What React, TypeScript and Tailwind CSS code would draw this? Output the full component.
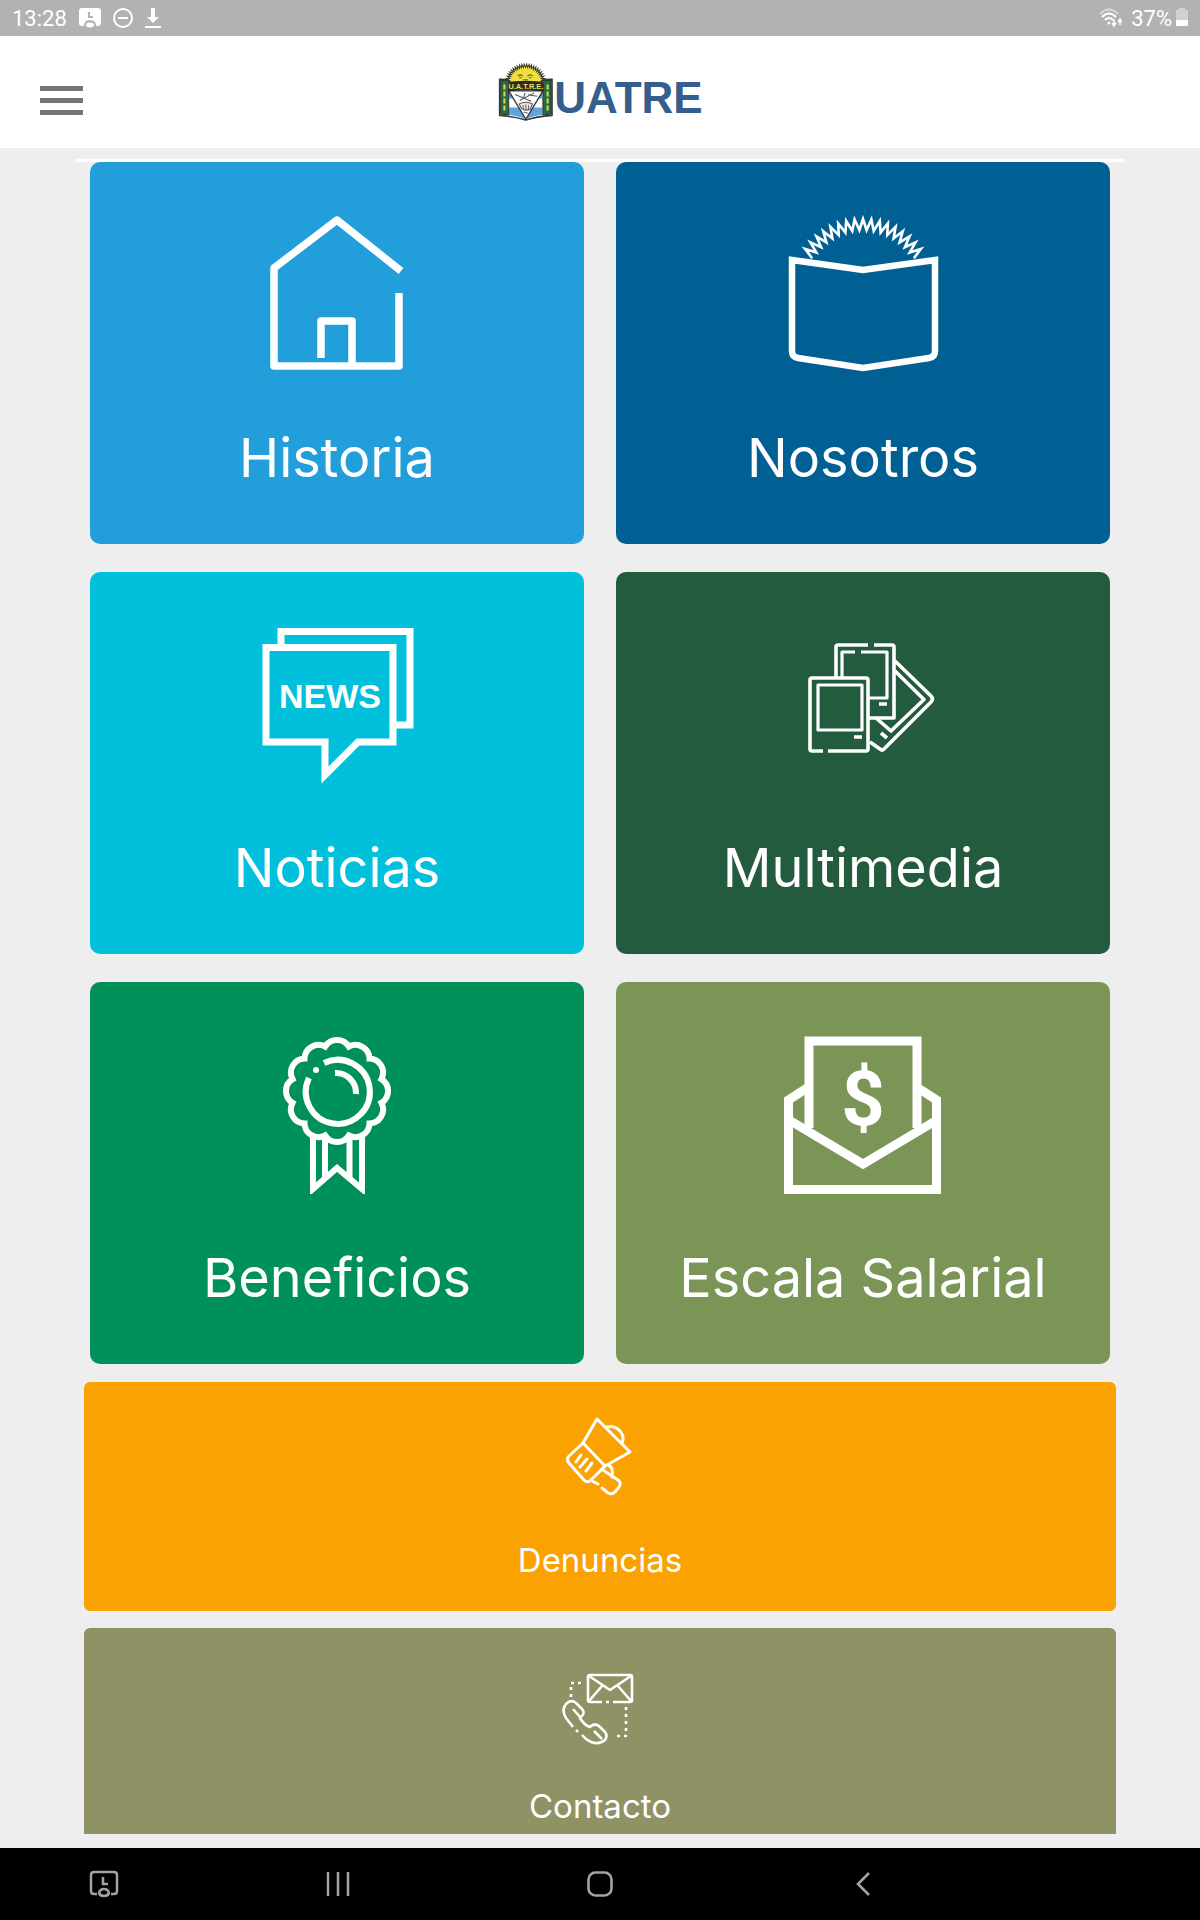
import { ReactNode } from "react";

interface IMenuItem {
    title: string;
    href: string;
    color: string;
    icon: ReactNode;
}

// zigzag line along an arc, used for the rays of the sun
const zigzag = (cx: number, cy: number, outer: number, inner: number, from: number, to: number, teeth: number) => {
    const steps = teeth * 2;
    const points: string[] = [];
    for (let i = 0; i <= steps; i++) {
        const angle = ((from + ((to - from) * i) / steps) * Math.PI) / 180;
        const r = i % 2 === 0 ? inner : outer;
        points.push(`${(cx + r * Math.sin(angle)).toFixed(1)},${(cy - r * Math.cos(angle)).toFixed(1)}`);
    }
    return points.join(" ");
};

// closed scalloped circle
const scallop = (cx: number, cy: number, r: number, lobe: number, count: number) => {
    let d = "";
    for (let i = 0; i <= count; i++) {
        const angle = ((i + 0.5) * 2 * Math.PI) / count;
        const x = (cx + r * Math.sin(angle)).toFixed(1);
        const y = (cy - r * Math.cos(angle)).toFixed(1);
        d += i === 0 ? `M${x} ${y}` : `A${lobe} ${lobe} 0 0 1 ${x} ${y}`;
    }
    return d + "Z";
};

function HouseIcon() {
    return (
        <svg className="size-40" viewBox="0 0 160 160" fill="none" stroke="white" strokeWidth="7.5" strokeLinejoin="round" aria-hidden="true">
            <path d="M144 57L80 6L17 54V152H142V79" />
            <path d="M64 144V107H95V152" />
        </svg>
    );
}

function BookIcon() {
    return (
        <svg className="size-40" viewBox="0 0 160 160" fill="none" stroke="white" aria-hidden="true">
            <polyline points={zigzag(80, 76, 71, 60, -58, 58, 17)} strokeWidth="2.6" />
            <path d="M9 46L80 56L152 46V137Q152 143 146 144L80 154L15 144Q9 143 9 137Z" fill="#005f93" strokeWidth="6.5" />
        </svg>
    );
}

function NewsIcon() {
    return (
        <svg className="size-40" viewBox="0 0 160 160" fill="none" stroke="white" strokeWidth="7" aria-hidden="true">
            <path d="M24 22V7.500H153V101H138" />
            <path d="M9 23.500H136V118H101L68 151V118H9Z" />
            <text x="73" y="84" textAnchor="middle" fill="white" stroke="none" className="font-['Liberation_Sans',sans-serif] text-[34px] font-bold">NEWS</text>
        </svg>
    );
}

function PhotosIcon() {
    return (
        <svg className="size-40" viewBox="0 0 160 160" fill="none" stroke="white" strokeWidth="3.6" strokeLinejoin="round" aria-hidden="true">
            <path d="M40 127H29Q27 127 27 125V56Q27 54 29 54H83Q85 54 85 56V125Q85 127 83 127H45" />
            <rect x="35" y="61" width="44" height="45" strokeWidth="3.2" />
            <path d="M71 113H79M96 80H104" />
            <path d="M53 53V23Q53 21 55 21H85M91 21H109Q111 21 111 23V94H86" />
            <path d="M59 53V28H72M78 28H104V74H86" strokeWidth="3.2" />
            <path d="M112 37L148 72Q151 75 148 78L101 125Q99 127 97 125L87 118" />
            <path d="M112 47L141 75.500L108 107L93 94M98 109L104 114" />
        </svg>
    );
}

function RibbonIcon() {
    return (
        <svg className="size-40" viewBox="0 0 160 160" fill="none" stroke="white" strokeWidth="6" aria-hidden="true">
            <path d={scallop(80, 57, 46, 14, 12)} />
            <path d="M67 29A32 32 0 1 1 52 44" />
            <path d="M78 39A20 20 0 0 1 99 60" />
            <circle cx="59" cy="36" r="3" fill="white" stroke="none" />
            <path d="M56 102V155L80 134L105 155V102M68 102V143M92.500 102V143" />
        </svg>
    );
}

function SalaryIcon() {
    return (
        <svg className="size-40" viewBox="0 0 160 160" fill="none" stroke="white" strokeWidth="9" aria-hidden="true">
            <path d="M26 94V7H134V94" />
            <path d="M24 54L5.500 66V155.500H153.500V66L135 54" />
            <path d="M6 86L80 130L154 86" />
            <text x="80" y="91" textAnchor="middle" fill="white" stroke="none" className="font-['Roboto',sans-serif] text-[76px] font-bold">$</text>
        </svg>
    );
}

function MegaphoneIcon() {
    return (
        <svg className="h-[84px] w-20" viewBox="0 0 80 84" fill="none" stroke="white" strokeWidth="3" strokeLinejoin="round" strokeLinecap="round" aria-hidden="true">
            <path d="M37 2L70 35L45 49L23 26Z" />
            <path d="M23 26L9 39Q6 42 9 46L24 63Q28 67 32 62L45 49" />
            <path d="M21 38L16 45M27 42L20 50M32 46L26 54" />
            <path d="M47 10Q54 8 60 14Q65 20 62 26" />
            <path d="M48 48Q54 50 52 60M43 53L58 63Q62 66 59 70L55 75Q52 78 48 76L42 71M32 64L38 67" />
        </svg>
    );
}

function ContactIcon() {
    return (
        <svg className="h-[84px] w-20" viewBox="0 0 80 84" fill="none" stroke="white" strokeWidth="2.6" strokeLinejoin="round" aria-hidden="true">
            <path d="M42 39H30Q28 39 28 37V14Q28 12 30 12H70Q72 12 72 14V37Q72 39 70 39H53M46 39H49" />
            <path d="M29 13L50 27L71 13M29 38L42 23M71 38L58 23" />
            <path d="M11 34V20H22" strokeDasharray="3 4" />
            <path d="M66 44V73H54" strokeDasharray="3 4" />
            <path d="M13 64L6 55Q1 47 6 41Q11 36 16 40L22 46Q26 50 20 55Q24 62 30 64Q35 59 40 64L45 69Q48 73 45 77Q39 82 31 79Q26 77 22 72M16 67L18 69" />
            <path d="M13 46L20 54M34 68L42 76" />
        </svg>
    );
}

function Emblem() {
    return (
        <svg className="h-[59px] w-[57px]" viewBox="112 66 170 176" fill="none" aria-hidden="true">
            <polyline points={zigzag(197, 129, 60, 50, -84, 84, 24)} fill="#f0de3c" stroke="#3a3a30" strokeWidth="3" />
            <path d="M174 105Q181 98 189 105M203 105Q211 98 218 105M178 110H186M207 110H215M190 116H204" stroke="#6b5f20" strokeWidth="3" />
            <path d="M120 115Q150 114 152 124H243Q245 114 276 115V222Q230 226 198 236Q165 226 120 222Z" fill="#fff" stroke="#33383a" strokeWidth="5" />
            <path d="M148 148H247V172H148ZM148 199H247V220Q220 224 198 232Q175 224 148 220Z" fill="#5fa4dc" />
            <path d="M123 118H147V221L123 218ZM249 118H273V218L249 221Z" fill="#286b42" stroke="#2c3732" strokeWidth="3" />
            <path d="M134 130V212M263 130V212" stroke="#d5dc4a" strokeWidth="6" strokeDasharray="15 6" />
            <path d="M147 149H249L198 234Z" fill="#fff" stroke="#33383a" strokeWidth="4" />
            <path d="M166 160L214 180M223 155L180 178M196 155L190 172M205 161L232 165" stroke="#555" strokeWidth="3" />
            <path d="M178 188Q198 178 218 188L211 204Q197 210 185 202Z" fill="#f2e2dc" stroke="#555" strokeWidth="3" />
            <path d="M190 192V203M198 190V206M206 192V203M191 212L204 216" stroke="#666" strokeWidth="3" />
            <path d="M145 124Q198 114 251 124V151Q198 144 145 151Z" fill="#2b2d26" />
            <text x="198" y="143" textAnchor="middle" fill="#eee35a" className="font-['Liberation_Sans',sans-serif] text-[22px] font-bold">U.A.T.R.E.</text>
        </svg>
    );
}

const mainItems: IMenuItem[] = [
    { title: 'Historia', href: '#historia', color: 'bg-[#229fdb]', icon: <HouseIcon /> },
    { title: 'Nosotros', href: '#nosotros', color: 'bg-[#005f93]', icon: <BookIcon /> },
    { title: 'Noticias', href: '#noticias', color: 'bg-[#00c0dc]', icon: <NewsIcon /> },
    { title: 'Multimedia', href: '#multimedia', color: 'bg-[#235b3f]', icon: <PhotosIcon /> },
    { title: 'Beneficios', href: '#beneficios', color: 'bg-[#00905a]', icon: <RibbonIcon /> },
    { title: 'Escala Salarial', href: '#escala-salarial', color: 'bg-[#7b9556]', icon: <SalaryIcon /> },
];

function StatusBar() {
    return (
        <div className="flex h-9 items-center justify-between bg-[#b2b2b2] px-3 font-['Roboto',sans-serif] text-[22px] text-white">
            <div className="flex items-center gap-3">
                <span>13:28</span>
                <svg className="h-5 w-[22px]" viewBox="0 0 22 20" aria-hidden="true">
                    <path d="M3 0H19Q22 0 22 3V15Q22 18 19 18H17Q17 12 11 12Q5 12 5 18H3Q0 18 0 15V3Q0 0 3 0Z" fill="white" />
                    <ellipse cx="11" cy="17" rx="4" ry="2.400" fill="white" />
                    <path d="M10 4V9H14" fill="none" stroke="#b2b2b2" strokeWidth="2" />
                </svg>
                <svg className="size-5" viewBox="0 0 20 20" fill="none" stroke="white" strokeWidth="2" aria-hidden="true">
                    <circle cx="10" cy="10" r="9" />
                    <path d="M5 10H15" />
                </svg>
                <svg className="h-[22px] w-4" viewBox="0 0 16 22" fill="white" aria-hidden="true">
                    <path d="M6 1H10V10H14L8 16L2 10H6ZM0 19H16V21H0Z" />
                </svg>
            </div>
            <div className="flex items-center gap-1">
                <svg className="mr-1 h-5 w-6" viewBox="0 0 24 20" fill="none" stroke="white" strokeWidth="2" aria-hidden="true">
                    <path d="M1 6Q10 -3 19 6" opacity="0.5" />
                    <path d="M3 9Q10 2 17 9M6 12Q10 8 14 12" />
                    <circle cx="10" cy="15" r="1.500" fill="white" stroke="none" />
                    <path d="M15 11V17M13 15L15 18L17 15M21 17V12M19 14L21 11L23 14" strokeWidth="1.500" />
                </svg>
                <span>37%</span>
                <svg className="h-5 w-3" viewBox="0 0 12 20" fill="white" aria-hidden="true">
                    <path d="M3 0H9V2H12V12H0V2H3Z" opacity="0.4" />
                    <path d="M0 12H12V17Q12 18 11 18H1Q0 18 0 17Z" />
                </svg>
            </div>
        </div>
    );
}

function Header() {
    return (
        <header className="grid h-28 grid-cols-[1fr_auto_1fr] items-center bg-white px-10">
            <button type="button" aria-label="Menú" className="mt-4 flex w-[43px] flex-col gap-[7px]">
                <span className="h-[5px] w-full bg-[#757575]" />
                <span className="h-[5px] w-full bg-[#757575]" />
                <span className="h-[5px] w-full bg-[#757575]" />
            </button>
            <a href="#inicio" className="flex items-center">
                <Emblem />
                <span className="pt-3 font-['Liberation_Sans',sans-serif] text-[44px] leading-none font-bold text-[#345e8c]">UATRE</span>
            </a>
        </header>
    );
}

function MenuCard({ item }: { item: IMenuItem }) {
    return (
        <a href={item.href} className={`flex h-[382px] flex-col items-center gap-[46px] rounded-[10px] pt-[52px] text-white ${item.color}`}>
            {item.icon}
            <span className="text-[54px] leading-[76px]">{item.title}</span>
        </a>
    );
}

function BottomNav() {
    return (
        <nav className="grid h-[72px] grid-cols-[207fr_262fr_262fr_262fr_207fr] items-center justify-items-center bg-black">
            <button type="button" aria-label="Captura">
                <svg className="h-7 w-[30px]" viewBox="0 0 30 28" fill="none" stroke="#a3a3a3" strokeWidth="2.500" aria-hidden="true">
                    <path d="M8 24H5Q2 24 2 21V5Q2 2 5 2H25Q28 2 28 5V21Q28 24 25 24H22" />
                    <path d="M14 7V14H19" />
                    <path d="M10 23Q11 19 15 19Q19 19 20 23Q19 26 15 26Q11 26 10 23Z" />
                </svg>
            </button>
            <button type="button" aria-label="Recientes">
                <svg className="h-[26px] w-6" viewBox="0 0 24 26" fill="none" stroke="#a3a3a3" strokeWidth="2.500" aria-hidden="true">
                    <path d="M2 1V25M12 1V25M22 1V25" />
                </svg>
            </button>
            <button type="button" aria-label="Inicio">
                <svg className="size-[26px]" viewBox="0 0 26 26" fill="none" stroke="#a3a3a3" strokeWidth="2.600" aria-hidden="true">
                    <rect x="1.500" y="1.500" width="23" height="23" rx="7" />
                </svg>
            </button>
            <button type="button" aria-label="Atrás">
                <svg className="h-[26px] w-4" viewBox="0 0 16 26" fill="none" stroke="#a3a3a3" strokeWidth="2.600" aria-hidden="true">
                    <path d="M15 2L4 13L15 24" />
                </svg>
            </button>
        </nav>
    );
}

function App() {
    return (
        <div className="flex min-h-screen flex-col bg-[#eeeeee] font-['Inter',sans-serif]">
            <StatusBar />
            <Header />
            <main className="flex-1 px-[76px] pt-[11px] pb-3.5">
                <div className="grid grid-cols-2 gap-x-8 gap-y-7 border-t-[3px] border-white px-3.5">
                    {mainItems.map(item => (
                        <MenuCard key={item.title} item={item} />
                    ))}
                </div>
                <div className="flex flex-col gap-[17px] px-2 pt-[18px]">
                    <a href="#denuncias" className="flex h-[229px] flex-col items-center gap-[38px] rounded-md bg-[#f9a202] pt-[35px] text-white">
                        <MegaphoneIcon />
                        <span className="text-[33px] leading-[42px]">Denuncias</span>
                    </a>
                    <a href="#contacto" className="flex h-[206px] flex-col items-center gap-[38px] rounded-t-md bg-[#8e9265] pt-[35px] text-white">
                        <ContactIcon />
                        <span className="text-[33px] leading-[42px]">Contacto</span>
                    </a>
                </div>
            </main>
            <BottomNav />
        </div>
    );
}

export default App;
